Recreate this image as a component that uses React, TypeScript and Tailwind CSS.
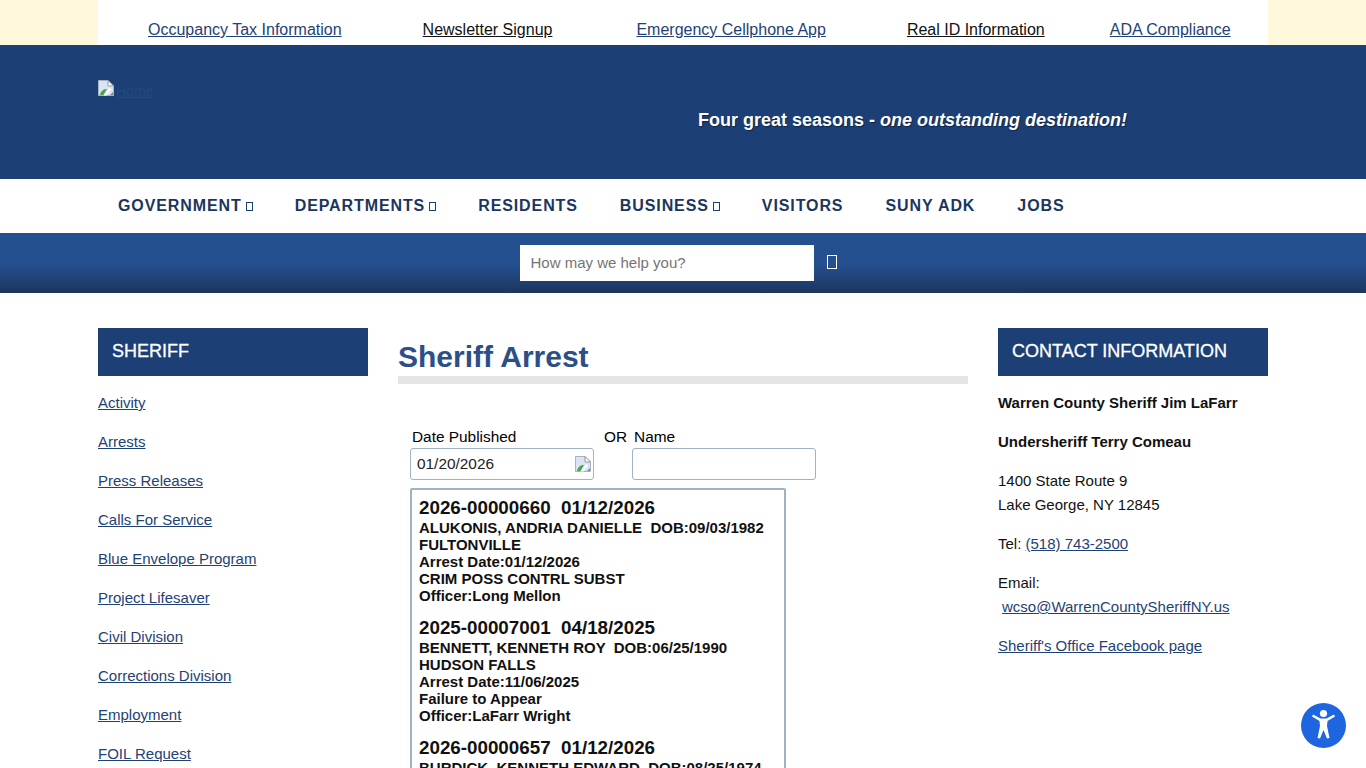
import React from "react";

const topLinks = [
  { label: "Occupancy Tax Information", cls: "text-[#1e4276]" },
  { label: "Newsletter Signup", cls: "ml-[81px] text-[#111]" },
  { label: "Emergency Cellphone App", cls: "ml-[84px] text-[#1e4276]" },
  { label: "Real ID Information", cls: "ml-[81px] text-[#111]" },
  { label: "ADA Compliance", cls: "ml-[65px] text-[#1e4276]" },
];

const navItems = [
  { label: "GOVERNMENT", caret: true },
  { label: "DEPARTMENTS", caret: true },
  { label: "RESIDENTS", caret: false },
  { label: "BUSINESS", caret: true },
  { label: "VISITORS", caret: false },
  { label: "SUNY ADK", caret: false },
  { label: "JOBS", caret: false },
];

const sideLinks = [
  "Activity",
  "Arrests",
  "Press Releases",
  "Calls For Service",
  "Blue Envelope Program",
  "Project Lifesaver",
  "Civil Division",
  "Corrections Division",
  "Employment",
  "FOIL Request",
];

const arrests = [
  {
    id: "2026-00000660  01/12/2026",
    lines: ["ALUKONIS, ANDRIA DANIELLE  DOB:09/03/1982", "FULTONVILLE", "Arrest Date:01/12/2026", "CRIM POSS CONTRL SUBST", "Officer:Long Mellon"],
  },
  {
    id: "2025-00007001  04/18/2025",
    lines: ["BENNETT, KENNETH ROY  DOB:06/25/1990", "HUDSON FALLS", "Arrest Date:11/06/2025", "Failure to Appear", "Officer:LaFarr Wright"],
  },
  {
    id: "2026-00000657  01/12/2026",
    lines: ["BURDICK, KENNETH EDWARD  DOB:08/25/1974"],
  },
];

function BrokenImage() {
  return (
    <svg width="16" height="16" viewBox="0 0 16 16" className="shrink-0">
      <path d="M0.5 0.5h9.5l5.5 5.5v9.5H0.5z" fill="#d9e4f5" stroke="#a9b2bd" strokeWidth="1" />
      <path d="M10 0.5v5.5h5.5z" fill="#ffffff" stroke="#8f98a3" strokeWidth="1" />
      <path d="M2 15c0.5-4 4-6.5 7-6l-3.5 6z" fill="#4ea34a" />
      <path d="M5.5 15.5l6-7.5 1.5 1.5-4.5 6z" fill="#ffffff" />
      <path d="M12 15l3-3v3z" fill="#7d858f" />
    </svg>
  );
}

function Tofu() {
  return <span className="ml-[4px] inline-block h-[9px] w-[7px] border border-[#1c3f76]" />;
}

export default function App() {
  return (
    <div className="h-[768px] overflow-hidden bg-white font-['Liberation_Sans',Arial,sans-serif] text-black">
      {/* top links */}
      <div className="h-[45px] bg-[#fff8dc]">
        <div className="mx-auto flex h-[45px] w-[1170px] items-end bg-white pb-[5px] pl-[50px] text-base leading-[20px]">
          {topLinks.map((l) => (
            <a key={l.label} href="#" className={`underline ${l.cls}`}>
              {l.label}
            </a>
          ))}
        </div>
      </div>

      {/* banner */}
      <div className="h-[134px] bg-[#1c3f76]">
        <div className="mx-auto flex h-full w-[1170px]">
          <div className="w-[600px] pt-[35px]">
            <div className="flex items-end">
              <BrokenImage />
              <span className="ml-[2px] -mb-[4px] text-sm leading-[17px] text-[#234a7a] underline">Home</span>
            </div>
          </div>
          <p className="pt-[63px] text-lg leading-[24px] font-bold text-white [text-shadow:1px_1px_1px_#10254a]">
            Four great seasons - <em>one outstanding destination!</em>
          </p>
        </div>
      </div>

      {/* nav */}
      <div className="h-[54px] bg-white">
        <div className="mx-auto flex h-full w-[1170px] items-center gap-[42px] pl-5 text-base font-bold tracking-[0.9px] text-[#1a3660]">
          {navItems.map((n) => (
            <a key={n.label} href="#" className="flex items-center leading-[20px]">
              {n.label}
              {n.caret && <Tofu />}
            </a>
          ))}
        </div>
      </div>

      {/* search */}
      <div className="flex h-[60px] justify-center border-t-[3px] border-[#1f5192] bg-gradient-to-b from-[#24508f] via-[#24508f] to-[#1c355f] pt-[9px] pr-[10px]">
        <div className="flex h-[36px] w-[294px] items-center bg-white pl-[11px] pt-[1px] text-[15px] text-[#757575]">How may we help you?</div>
        <div className="ml-[13px] mt-[10px] h-[14px] w-[10px] border border-white" />
      </div>

      {/* main */}
      <div className="mx-auto flex w-[1170px] gap-[30px] pt-[35px]">
        <aside className="w-[270px] shrink-0">
          <h2 className="flex h-[48px] items-center bg-[#1c3f76] px-[14px] pb-[2px] text-lg font-normal text-white [-webkit-text-stroke:0.3px_white]">SHERIFF</h2>
          <ul className="mt-[15px] flex flex-col gap-[15px] text-[15px] leading-[24px] text-[#1e4276]">
            {sideLinks.map((s) => (
              <li key={s}>
                <a href="#" className="underline">{s}</a>
              </li>
            ))}
          </ul>
        </aside>

        <main className="w-[570px] shrink-0">
          <h1 className="border-b-[8px] border-[#e5e5e5] pt-[14px] pb-[4px] text-[30px] leading-[30px] font-bold text-[#2b4f86]">Sheriff Arrest</h1>
          <div className="mt-[42px] flex pl-[12px] text-[15.4px]">
            <div className="w-[194px]">
              <label className="ml-[2px] block leading-[22px]">Date Published</label>
              <div className="flex h-[32px] w-[184px] items-center justify-between rounded-[3px] border border-[#9fb3c0] pl-[6px] pr-[2px] text-[#222]">
                01/20/2026
                <BrokenImage />
              </div>
            </div>
            <span className="leading-[22px]">OR</span>
            <div className="ml-[5px]">
              <label className="ml-[2px] block leading-[22px]">Name</label>
              <div className="h-[32px] w-[184px] rounded-[3px] border border-[#9fb3c0]" />
            </div>
          </div>
          <div className="ml-[12px] mt-[8px] w-[376px] rounded-[2px] border-2 border-[#9fb3c0] px-[7px] pt-[6px]">
            {arrests.map((a) => (
              <div key={a.id} className="mb-[12px]">
                <div className="text-[18.8px] leading-[23px] font-bold whitespace-pre text-[#111]">{a.id}</div>
                {a.lines.map((line) => (
                  <div key={line} className="text-[15px] leading-[17px] font-bold whitespace-pre text-[#111]">{line}</div>
                ))}
              </div>
            ))}
          </div>
        </main>

        <aside className="w-[270px] shrink-0">
          <h2 className="flex h-[48px] items-center bg-[#1c3f76] px-[14px] pb-[2px] text-lg font-normal text-white [-webkit-text-stroke:0.3px_white]">CONTACT INFORMATION</h2>
          <div className="mt-[15px] flex flex-col gap-[15px] text-[15px] leading-[24px] text-[#111]">
            <p className="font-bold">Warren County Sheriff Jim LaFarr</p>
            <p className="font-bold">Undersheriff Terry Comeau</p>
            <p>1400 State Route 9<br />Lake George, NY 12845</p>
            <p>Tel: <a href="#" className="text-[#1e4276] underline">(518) 743-2500</a></p>
            <p>
              Email:<br />
              <a href="#" className="ml-1 text-[#1e4276] underline">wcso@WarrenCountySheriffNY.us</a>
            </p>
            <p><a href="#" className="text-[#1e4276] underline">Sheriff's Office Facebook page</a></p>
          </div>
        </aside>
      </div>

      {/* accessibility button */}
      <button className="fixed bottom-[20px] right-[20px] flex h-[45px] w-[45px] items-center justify-center rounded-full bg-[#1e66e0]">
        <svg width="45" height="45" viewBox="0 0 45 45" fill="white">
          <circle cx="22.5" cy="10.5" r="3.6" />
          <path d="M11 13.5 L12 11.5 L19.5 15.5 H25.5 L33 11.5 L34 13.5 L26.5 18 L26 23 L28.5 35 L26 35.5 L22.5 27 L19 35.5 L16.5 35 L19 23 L18.5 18 Z" />
        </svg>
      </button>
    </div>
  );
}
